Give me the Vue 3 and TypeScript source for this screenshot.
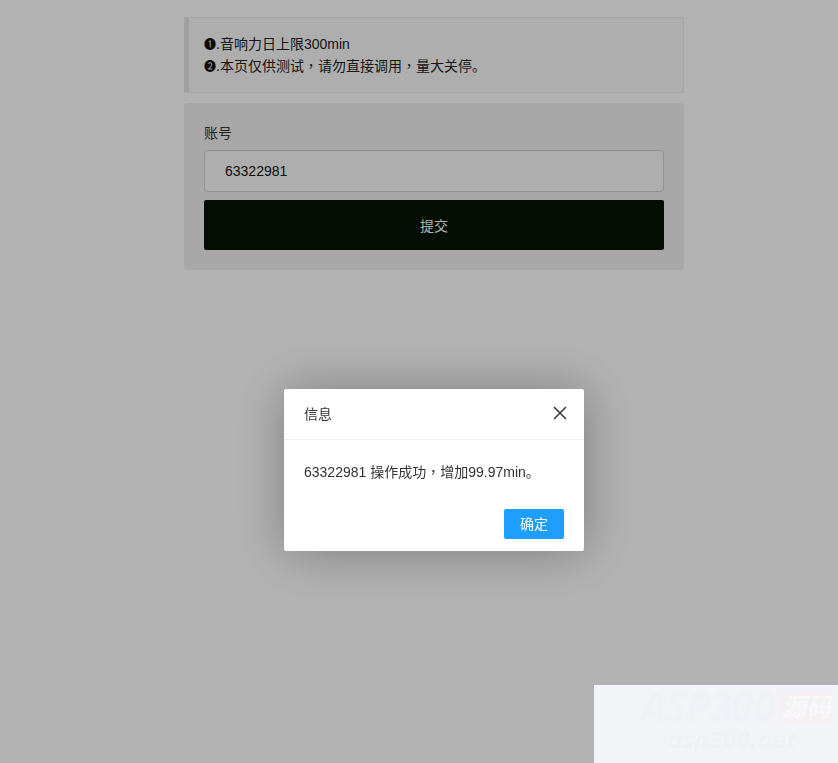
<script setup lang="ts">
interface Notice {
  mark: string
  parts: string[]
}
const notices: Notice[] = [
  { mark: '❶', parts: ['.音响力日上限300min'] },
  { mark: '❷', parts: ['.本页仅供测试', '请勿直接调用', '量大关停。'] },
]
const account = '63322981'
</script>

<template>
  <div class="page">
    <main class="container">
      <blockquote class="quote">
        <div v-for="n in notices" :key="n.mark" class="quote-line">
          <span class="mark">{{ n.mark }}</span>
          <template v-for="(p, i) in n.parts" :key="i"><span v-if="i > 0" class="comma">，</span>{{ p }}</template>
        </div>
      </blockquote>
      <form class="card" @submit.prevent>
        <label class="label" for="acc">账号</label>
        <input id="acc" class="input" :value="account" readonly />
        <button class="submit" type="button">提交</button>
      </form>
    </main>

    <div class="shade"></div>

    <section class="dialog">
      <header class="dialog-title">
        <span>信息</span>
        <svg class="close" viewBox="0 0 14 14" width="14" height="14" aria-label="关闭">
          <path d="M1 1 L13 13 M13 1 L1 13" stroke="#2f3542" stroke-width="1.5" fill="none" />
        </svg>
      </header>
      <div class="dialog-body">63322981 操作成功<span class="comma">，</span>增加99.97min。</div>
      <footer class="dialog-foot">
        <button class="confirm" type="button">确定</button>
      </footer>
    </section>

    <aside class="watermark">
      <div class="wm-top">
        <span class="wm-brand">ASP300</span>
        <span class="wm-tag">源码</span>
      </div>
      <div class="wm-url">asp300.net</div>
    </aside>
  </div>
</template>

<style>
html,
body {
  margin: 0;
  background: #fff;
}
</style>

<style scoped>
.page {
  height: 763px;
  overflow: hidden;
  font-family: "Liberation Sans", "Noto Sans CJK SC", sans-serif;
  font-size: 14px;
  line-height: 22px;
  color: #333;
  box-sizing: border-box;
  padding: 17px 0 0 184px;
}

.container {
  width: 500px;
  display: flex;
  flex-direction: column;
  gap: 10px;
}

.quote {
  margin: 0;
  padding: 15px;
  border: 1px solid #eee;
  border-left: 5px solid #e6e6e6;
  border-radius: 0 2px 2px 0;
  background: #fafafa;
  color: #222;
}

.quote-line {
  height: 22px;
}

.mark {
  font-size: 12px;
  line-height: 0;
  color: #111;
  display: inline-block;
  width: 12px;
}

.comma {
  font-family: "Noto Sans CJK TC", sans-serif;
  line-height: 0;
}

.card {
  display: flex;
  flex-direction: column;
  padding: 20px;
  border-radius: 4px;
  background: #f1f1f1;
}

.label {
  line-height: 20px;
  margin-bottom: 7px;
}

.input {
  box-sizing: border-box;
  width: 100%;
  height: 42px;
  padding: 0 20px;
  border: 1px solid #d2d2d2;
  border-radius: 4px;
  background: #fafafa;
  color: #111;
  font: inherit;
  outline: none;
}

.submit {
  height: 50px;
  margin-top: 8px;
  border: 0;
  border-radius: 2px;
  background: #061306;
  color: #fff;
  font: inherit;
  padding: 2px 0 0;
}

.shade {
  position: fixed;
  inset: 0;
  background: rgba(0, 0, 0, 0.3);
}

.dialog {
  position: fixed;
  left: 284px;
  top: 389px;
  width: 300px;
  height: 162px;
  display: flex;
  flex-direction: column;
  border-radius: 2px;
  background: #fff;
  box-shadow: 1px 1px 50px rgba(0, 0, 0, 0.3);
}

.dialog-title {
  display: flex;
  align-items: center;
  justify-content: space-between;
  box-sizing: border-box;
  height: 51px;
  padding: 0 17px 0 20px;
  border-bottom: 1px solid #f0f0f0;
}

.close {
  display: block;
  margin-top: -2px;
}

.dialog-body {
  height: 24px;
  padding: 20px 20px 0;
  line-height: 24px;
}

.dialog-foot {
  display: flex;
  justify-content: flex-end;
  padding: 25px 20px 0;
}

.confirm {
  width: 60px;
  height: 30px;
  padding: 0;
  border: 0;
  border-radius: 2px;
  background: #1e9fff;
  color: #fff;
  font: inherit;
}

.watermark {
  position: fixed;
  right: 0;
  bottom: 0;
  width: 244px;
  height: 78px;
  box-sizing: border-box;
  padding: 5px 0 0 46px;
  background: #f3f4f7;
  font-family: "Open Sans", "Noto Sans CJK SC", sans-serif;
  font-style: italic;
  font-weight: 700;
}

.wm-top {
  display: flex;
  align-items: center;
  gap: 4px;
  height: 33px;
}

.wm-brand {
  font-size: 41px;
  line-height: 33px;
  letter-spacing: -1px;
  color: #eff3f8;
}

.wm-tag {
  padding: 0 3px;
  font-size: 25px;
  line-height: 33px;
  background: #f5f2f3;
  color: #f8f8fa;
}

.wm-url {
  margin: 2px 0 0 28px;
  font-size: 24px;
  line-height: 28px;
  letter-spacing: 0.5px;
  color: #f0f1f4;
}
</style>
